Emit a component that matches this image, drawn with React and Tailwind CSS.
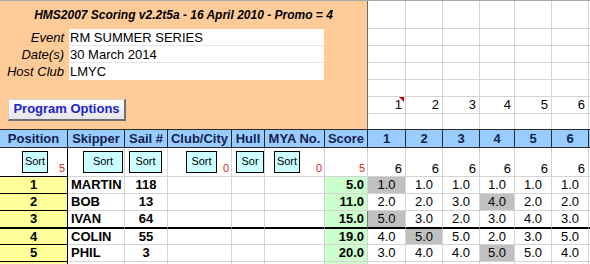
import React from "react";

const COLS =
  "grid grid-cols-[68px_57px_43px_64px_33px_60px_43px_38px_37px_37px_35px_37px_37px_1fr]";

const headers = ["Position", "Skipper", "Sail #", "Club/City", "Hull", "MYA No.", "Score", "1", "2", "3", "4", "5", "6", ""];

// sort buttons: left offset inside cell, width, label, red count
const sorts = [
  { ml: "ml-[22px]", w: "w-[26px]", label: "Sort", num: "5" },
  { ml: "ml-[15px]", w: "w-[40px]", label: "Sort" },
  { ml: "ml-[4px]", w: "w-[33px]", label: "Sort" },
  { ml: "ml-[18px]", w: "w-[31px]", label: "Sort", num: "0" },
  { ml: "ml-[4px]", w: "w-[28px]", label: "Sor" },
  { ml: "ml-[9px]", w: "w-[26px]", label: "Sort", num: "0" },
  { num: "5" },
];

const results = [
  { pos: 1, name: "MARTIN", sail: "118", score: "5.0", races: ["1.0", "1.0", "1.0", "1.0", "1.0", "1.0"], drop: 0 },
  { pos: 2, name: "BOB", sail: "13", score: "11.0", races: ["2.0", "2.0", "3.0", "4.0", "2.0", "2.0"], drop: 3 },
  { pos: 3, name: "IVAN", sail: "64", score: "15.0", races: ["5.0", "3.0", "2.0", "3.0", "4.0", "3.0"], drop: 0 },
  { pos: 4, name: "COLIN", sail: "55", score: "19.0", races: ["4.0", "5.0", "5.0", "2.0", "3.0", "5.0"], drop: 1 },
  { pos: 5, name: "PHIL", sail: "3", score: "20.0", races: ["3.0", "4.0", "4.0", "5.0", "5.0", "4.0"], drop: 3 },
  { pos: "", name: "", sail: "", score: "", races: ["", "", "", "", "", ""], drop: -1 },
];

function TopArea() {
  const info = [
    ["Event", "RM SUMMER SERIES"],
    ["Date(s)", "30 March 2014"],
    ["Host Club", "LMYC"],
  ];
  return (
    <div className="flex border-t border-[#a8a8a8]">
      <div className="w-[368px] h-[128px] shrink-0 bg-[#ffcc99] border-r border-[#6a6a6a] flex flex-col">
        <div className="h-[28px] flex items-center justify-center text-[12px] font-bold italic text-black">
          HMS2007 Scoring v2.2t5a - 16 April 2010 - Promo = 4
        </div>
        {info.map(([label, value], i) => (
          <div key={label} className="flex h-[17px]">
            <div className="w-[69px] pr-[5px] text-right italic text-[13px] leading-[17px]">{label}</div>
            <div
              className={[
                "w-[255px] bg-white pl-[1px] text-[13px] leading-[17px]",
                i < 2 ? "border-b border-[#e6e6e6]" : "",
              ].join(" ")}
            >
              {value}
            </div>
          </div>
        ))}
        <div className="mt-[16px] ml-[8px]">
          <button className="h-[22px] w-[118px] border border-[#d0d0d0] border-r-2 border-b-2 border-r-[#707070] border-b-[#707070] bg-gradient-to-b from-white to-[#e4e4ea] text-[13px] font-bold text-[#2222c8] leading-[18px]">
            Program Options
          </button>
        </div>
      </div>
      <div className="flex-1 grid grid-cols-[38px_37px_37px_35px_37px_37px_1fr] grid-rows-[28px_17px_17px_17px_17px_17px_15px]">
        {Array.from({ length: 7 }).map((_, r) =>
          Array.from({ length: 7 }).map((_, c) => (
            <div
              key={r + "-" + c}
              className={[
                "relative border-[#d4d4d4] text-right pr-[3px] text-[13px] leading-[16px]",
                c < 6 ? "border-r" : "",
                r < 6 ? "border-b" : "",
              ].join(" ")}
            >
              {r === 5 && c < 6 ? c + 1 : ""}
              {r === 5 && c === 0 ? (
                <span className="absolute right-[1px] top-0 h-0 w-0 border-l-[5px] border-b-[5px] border-l-transparent border-b-transparent border-t-[5px] border-t-[#d00000] border-r-0" />
              ) : null}
            </div>
          ))
        )}
      </div>
    </div>
  );
}

function HeaderRow() {
  return (
    <div className={COLS + " border-y border-[#2a2a2a] bg-[#99ccff]"}>
      {headers.map((h, i) => (
        <div
          key={i}
          className={[
            "h-[17px] text-center text-[13px] font-bold leading-[17px] text-[#14224f] whitespace-nowrap overflow-hidden",
            i < 13 ? "border-r border-[#2a2a2a]" : "",
          ].join(" ")}
        >
          {h}
        </div>
      ))}
    </div>
  );
}

function SortRow() {
  return (
    <div className={COLS + " bg-white"}>
      {headers.map((_, i) => {
        const s = sorts[i];
        return (
          <div
            key={i}
            className={[
              "h-[29px] flex overflow-hidden",
              i === 0 ? "border-b border-black" : "border-b border-[#d4d4d4]",
              i === 6 ? "border-r border-[#7a7a7a]" : i < 13 ? "border-r border-[#d4d4d4]" : "",
            ].join(" ")}
          >
            {s && s.label ? (
              <div
                className={[
                  "self-center h-[22px] shrink-0 border border-black bg-[#ccffff] text-[11px] leading-[19px] text-center overflow-hidden",
                  s.ml,
                  s.w,
                ].join(" ")}
              >
                {s.label}
              </div>
            ) : null}
            {s && s.num ? (
              <span className="ml-auto self-end pr-[2px] pb-[1px] text-[11px] leading-[14px] text-[#e02020]">{s.num}</span>
            ) : null}
            {i >= 7 && i < 13 ? (
              <span className="ml-auto self-end pr-[3px] text-[13px] leading-[15px]">6</span>
            ) : null}
          </div>
        );
      })}
    </div>
  );
}

function DataRow({ row, idx }) {
  const thick = idx === 2;
  const h = idx === 2 ? "h-[18px]" : idx === 3 ? "h-[16px]" : "h-[17px]";
  const bottom = thick ? "border-b-2 border-b-black" : "";
  const cells = [];

  cells.push(
    <div key="pos" className={[h, "bg-[#ffff99] border-r border-black text-center font-bold", thick ? bottom : "border-b border-black"].join(" ")}>
      {row.pos}
    </div>
  );
  cells.push(
    <div key="name" className={[h, "pl-[3px] font-bold border-r border-[#d4d4d4]", thick ? bottom : "border-b border-[#d4d4d4]"].join(" ")}>
      {row.name}
    </div>
  );
  cells.push(
    <div key="sail" className={[h, "text-center font-bold border-r border-[#d4d4d4]", thick ? bottom : "border-b border-[#d4d4d4]"].join(" ")}>
      {row.sail}
    </div>
  );
  ["club", "hull", "mya"].forEach((k) =>
    cells.push(
      <div key={k} className={[h, "border-r border-[#d4d4d4]", thick ? bottom : "border-b border-[#d4d4d4]"].join(" ")} />
    )
  );
  cells.push(
    <div key="score" className={[h, "bg-[#ccffcc] text-right pr-[3px] font-bold border-r border-[#7a7a7a]", thick ? bottom : "border-b border-[#d4d4d4]"].join(" ")}>
      {row.score}
    </div>
  );
  row.races.forEach((v, j) =>
    cells.push(
      <div
        key={"r" + j}
        className={[
          h,
          "text-center border-r border-[#d4d4d4]",
          j === row.drop ? "bg-[#c0c0c0]" : "",
          thick ? bottom : "border-b border-[#d4d4d4]",
        ].join(" ")}
      >
        {v}
      </div>
    )
  );
  cells.push(<div key="end" className={[h, thick ? bottom : "border-b border-[#d4d4d4]"].join(" ")} />);

  return <div className={COLS + " text-[13px] leading-[16px] text-black"}>{cells}</div>;
}

export default function App() {
  return (
    <div className="w-[590px] h-[264px] overflow-hidden bg-white font-['Liberation_Sans',Arial,sans-serif] text-black">
      <TopArea />
      <HeaderRow />
      <SortRow />
      {results.map((row, idx) => (
        <DataRow key={idx} row={row} idx={idx} />
      ))}
    </div>
  );
}
